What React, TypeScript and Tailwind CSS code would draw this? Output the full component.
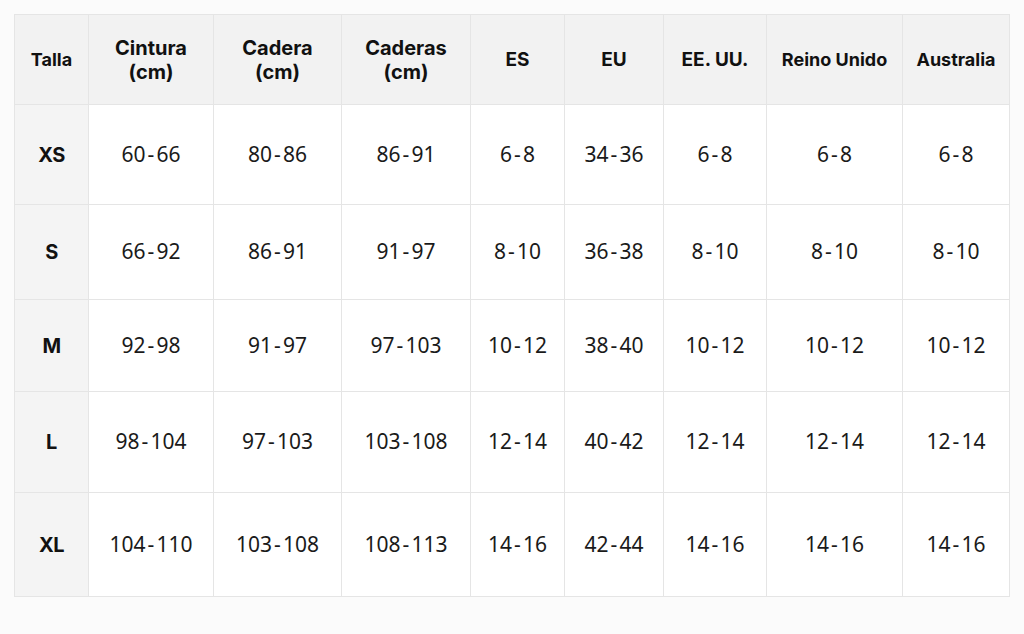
import React from "react";

const headers: { lines: string[]; size: string }[] = [
  { lines: ["Talla"], size: "text-[18px]" },
  { lines: ["Cintura", "(cm)"], size: "text-[20px]" },
  { lines: ["Cadera", "(cm)"], size: "text-[20px]" },
  { lines: ["Caderas", "(cm)"], size: "text-[20px]" },
  { lines: ["ES"], size: "text-[19px]" },
  { lines: ["EU"], size: "text-[19px]" },
  { lines: ["EE. UU."], size: "text-[19px]" },
  { lines: ["Reino Unido"], size: "text-[18px]" },
  { lines: ["Australia"], size: "text-[18px]" },
];

const rows: { size: string; h: string; cells: string[] }[] = [
  { size: "XS", h: "h-[100px]", cells: ["60-66", "80-86", "86-91", "6-8", "34-36", "6-8", "6-8", "6-8"] },
  { size: "S", h: "h-[95px]", cells: ["66-92", "86-91", "91-97", "8-10", "36-38", "8-10", "8-10", "8-10"] },
  { size: "M", h: "h-[92px]", cells: ["92-98", "91-97", "97-103", "10-12", "38-40", "10-12", "10-12", "10-12"] },
  { size: "L", h: "h-[101px]", cells: ["98-104", "97-103", "103-108", "12-14", "40-42", "12-14", "12-14", "12-14"] },
  { size: "XL", h: "h-[104px]", cells: ["104-110", "103-108", "108-113", "14-16", "42-44", "14-16", "14-16", "14-16"] },
];

const gridCols =
  "grid grid-cols-[74px_125px_128px_129px_94px_99px_103px_136px_107px]";

function Range({ value }: { value: string }) {
  const [a, b] = value.split("-");
  return (
    <span className="inline-flex items-center">
      <span>{a}</span>
      <span className="mx-[2px]">-</span>
      <span>{b}</span>
    </span>
  );
}

export default function App() {
  return (
    <div className="w-full h-[634px] bg-[#fbfbfb] pt-[14px] pl-[14px]">
      <div className="w-[996px] border-l border-t border-[#e5e5e5] bg-white">
        <div className={`${gridCols} h-[90px] bg-[#f2f2f2]`}>
          {headers.map((h, i) => (
            <div
              key={i}
              className={`flex flex-col items-center justify-center border-r border-b border-[#e5e5e5] text-center ${h.size} leading-[24px] font-bold text-[#111] [font-family:Inter,'Liberation_Sans',sans-serif]`}
            >
              {h.lines.map((l, j) => (
                <span key={j}>{l}</span>
              ))}
            </div>
          ))}
        </div>
        {rows.map((r) => (
          <div key={r.size} className={`${gridCols} ${r.h}`}>
            <div className="flex items-center justify-center border-r border-b border-[#e5e5e5] bg-[#f4f4f4] text-[20px] tracking-[-0.5px] font-bold text-[#111] [font-family:Inter,'Liberation_Sans',sans-serif]">
              {r.size}
            </div>
            {r.cells.map((c, i) => (
              <div
                key={i}
                className="flex items-center justify-center border-r border-b border-[#e5e5e5] bg-white text-[21px] text-[#1a1a1a] [font-family:'Noto_Sans',sans-serif]"
              >
                <Range value={c} />
              </div>
            ))}
          </div>
        ))}
      </div>
    </div>
  );
}
